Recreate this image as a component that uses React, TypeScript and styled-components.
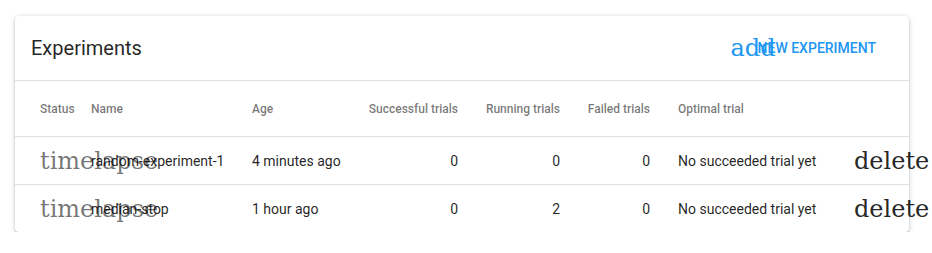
import React from "react";
import styled, { createGlobalStyle } from "styled-components";

const GlobalStyle = createGlobalStyle`
  html, body { margin: 0; padding: 0; background: #fff; }
  body { font-family: Roboto, "Liberation Sans", sans-serif; }
`;

const Page = styled.div`
  padding: 16px 0 0 15px;
`;

const Card = styled.div`
  width: 894px;
  background: #fff;
  border-radius: 4px;
  box-shadow: 0px 1px 5px 0px rgba(0, 0, 0, 0.2), 0px 2px 2px 0px rgba(0, 0, 0, 0.14),
    0px 3px 1px -2px rgba(0, 0, 0, 0.12);
`;

const Toolbar = styled.div`
  height: 64px;
  display: flex;
  align-items: center;
  justify-content: space-between;
  padding: 0 25px 0 16px;
  border-bottom: 1px solid rgba(224, 224, 224, 1);
`;

const Title = styled.h2`
  margin: 0;
  font-family: Roboto, sans-serif;
  font-size: 20px;
  font-weight: 400;
  color: rgba(0, 0, 0, 0.87);
`;

const Button = styled.button`
  display: flex;
  align-items: center;
  border: none;
  background: transparent;
  padding: 6px 8px;
  font-family: Roboto, sans-serif;
  font-size: 14px;
  font-weight: 500;
  text-transform: uppercase;
  color: #2196f3;
  cursor: pointer;
`;

const Icon = styled.span<{ $tone: "primary" | "muted" | "dark" }>`
  display: inline-block;
  width: 24px;
  height: 24px;
  flex-shrink: 0;
  font-family: "DejaVu Serif", serif;
  font-size: 24px;
  font-weight: 400;
  line-height: 24px;
  text-transform: none;
  white-space: nowrap;
  color: ${(p) =>
    p.$tone === "primary" ? "#2196f3" : p.$tone === "muted" ? "rgba(0,0,0,0.54)" : "rgba(0,0,0,0.87)"};
`;

const ButtonIcon = styled(Icon)`
  margin-right: 3px;
`;

const Grid = styled.div`
  display: grid;
  grid-template-columns: 76px 161px 100px 106px 102px 90px 204px 55px;
`;

const Row = styled.div<{ $head?: boolean; $last?: boolean }>`
  display: contents;
  & > * {
    height: ${(p) => (p.$head ? "55px" : "47px")};
    border-bottom: ${(p) => (p.$last ? "none" : "1px solid rgba(224, 224, 224, 1)")};
    font-size: ${(p) => (p.$head ? "12px" : "14px")};
    font-weight: ${(p) => (p.$head ? 500 : 400)};
    color: ${(p) => (p.$head ? "rgba(0, 0, 0, 0.54)" : "rgba(0, 0, 0, 0.87)")};
  }
`;

const Cell = styled.div<{ $align?: "left" | "right"; $pl?: number }>`
  display: flex;
  align-items: center;
  justify-content: ${(p) => (p.$align === "right" ? "flex-end" : "flex-start")};
  padding-left: ${(p) => p.$pl ?? 0}px;
  font-family: Roboto, sans-serif;
  white-space: nowrap;
  min-width: 0;
`;

const experiments = [
  { name: "random-experiment-1", age: "4 minutes ago", succeeded: 0, running: 0, failed: 0 },
  { name: "median-stop", age: "1 hour ago", succeeded: 0, running: 2, failed: 0 },
];

export default function App() {
  return (
    <>
      <GlobalStyle />
      <Page>
        <Card>
          <Toolbar>
            <Title>Experiments</Title>
            <Button>
              <ButtonIcon $tone="primary">add</ButtonIcon>
              New Experiment
            </Button>
          </Toolbar>
          <Grid>
            <Row $head>
              <Cell $pl={25}>Status</Cell>
              <Cell>Name</Cell>
              <Cell>Age</Cell>
              <Cell $align="right">Successful trials</Cell>
              <Cell $align="right">Running trials</Cell>
              <Cell $align="right">Failed trials</Cell>
              <Cell $pl={28}>Optimal trial</Cell>
              <Cell />
            </Row>
            {experiments.map((e, i) => (
              <Row key={e.name} $last={i === experiments.length - 1}>
                <Cell $pl={25}>
                  <Icon $tone="muted">timelapse</Icon>
                </Cell>
                <Cell>{e.name}</Cell>
                <Cell>{e.age}</Cell>
                <Cell $align="right">{e.succeeded}</Cell>
                <Cell $align="right">{e.running}</Cell>
                <Cell $align="right">{e.failed}</Cell>
                <Cell $pl={28}>No succeeded trial yet</Cell>
                <Cell>
                  <Icon $tone="dark">delete</Icon>
                </Cell>
              </Row>
            ))}
          </Grid>
        </Card>
      </Page>
    </>
  );
}
